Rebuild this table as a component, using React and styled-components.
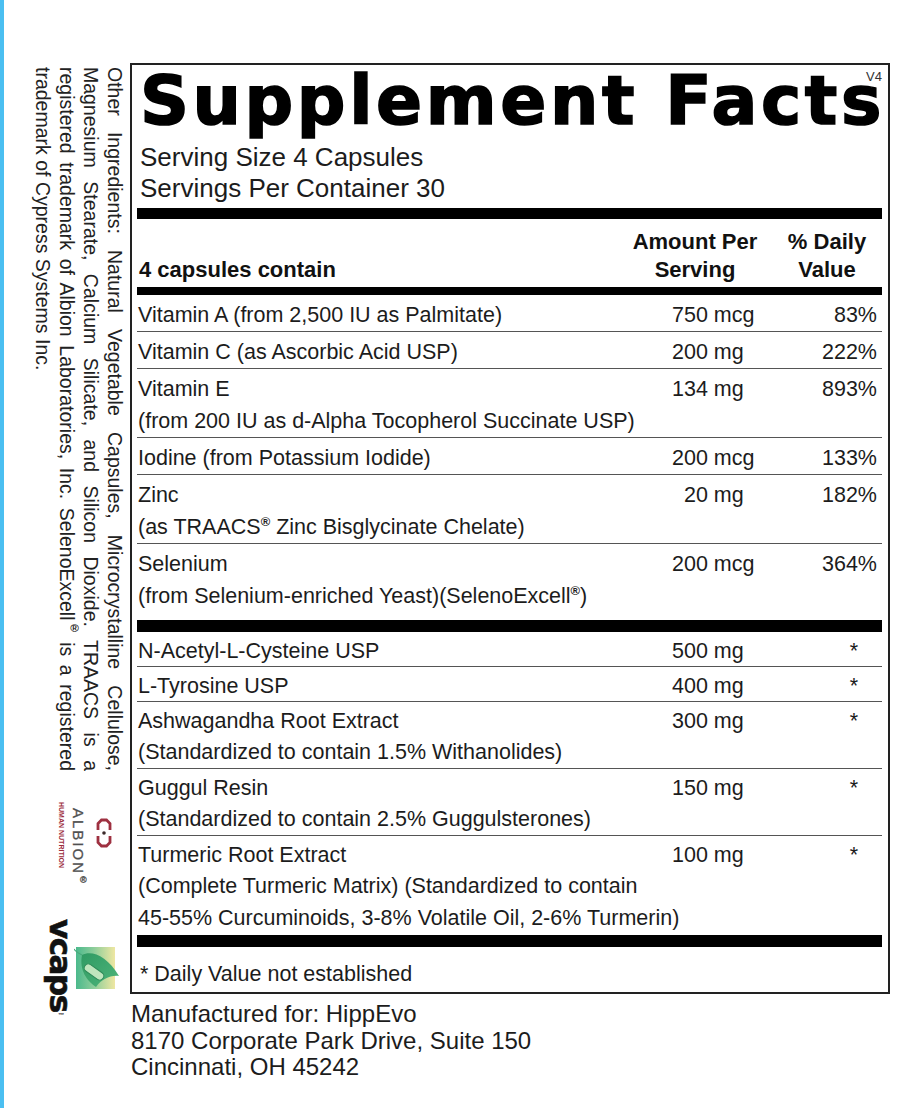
import React from "react";
import styled, { createGlobalStyle } from "styled-components";

const GlobalStyle = createGlobalStyle`
  html, body { margin: 0; padding: 0; background: #fff; }
  * { box-sizing: border-box; }
`;

const Page = styled.div`
  display: flex;
  min-height: 1108px;
  border-left: 4px solid #4bbff1;
  background: #fff;
  color: #1c1c1c;
  font-family: "Liberation Sans", Arial, sans-serif;
`;

const Side = styled.aside`
  width: 126px;
  flex: none;
  display: flex;
  flex-direction: column;
  align-items: flex-end;
  padding: 67px 3px 0 0;
`;

const Ingredients = styled.div`
  writing-mode: vertical-rl;
  height: 704px;
  font-size: 19.5px;
  line-height: 24px;
  color: #222;
`;

const IngLine = styled.div`
  text-align: justify;
  text-align-last: ${(p) => (p.$last ? "start" : "justify")};
`;

const Reg = styled.sup`
  font-size: 0.6em;
  font-weight: 700;
  line-height: 0;
  vertical-align: 0.6em;
`;

const Albion = styled.div`
  display: flex;
  align-items: flex-start;
  margin: 31px 14px 0 0;
`;

const HumanNutrition = styled.div`
  writing-mode: vertical-rl;
  font-size: 7px;
  line-height: 7px;
  font-weight: 700;
  color: #9b2c3c;
`;

const AlbionWord = styled.div`
  writing-mode: vertical-rl;
  font-size: 15px;
  line-height: 15px;
  letter-spacing: 2px;
  color: #505050;
  margin: 6px 0 0 6px;
  -webkit-text-stroke: 0.3px #505050;
`;

const AlbionMark = styled.svg`
  margin: 16px 0 0 9px;
  flex: none;
`;

const Vcaps = styled.div`
  display: flex;
  align-items: flex-start;
  margin: 32px 7px 0 0;
`;

const VcapsWord = styled.div`
  writing-mode: vertical-rl;
  font-family: "DejaVu Sans", sans-serif;
  font-weight: 700;
  font-size: 31px;
  line-height: 22px;
  letter-spacing: -1.5px;
  color: #111;
  -webkit-text-stroke: 0.6px #111;
`;

const Tm = styled.span`
  font-family: "Liberation Sans", sans-serif;
  font-size: 6px;
  font-weight: 700;
  letter-spacing: 0;
  -webkit-text-stroke: 0;
`;

const Leaf = styled.svg`
  margin: 27px 0 0 2px;
  flex: none;
`;

const Main = styled.main`
  width: 760px;
  flex: none;
  padding-top: 63px;
  display: flex;
  flex-direction: column;
`;

const Box = styled.section`
  border: 2px solid #222;
  padding: 0 6px 0 5px;
`;

const TitleRow = styled.div`
  position: relative;
  padding-top: 2px;
`;

const Title = styled.h1`
  margin: 0 0 0 3px;
  font-family: "DejaVu Sans", sans-serif;
  font-weight: 700;
  font-size: 68px;
  line-height: 68px;
  letter-spacing: 3.6px;
  white-space: nowrap;
  color: #000;
  -webkit-text-stroke: 1.6px #000;
`;

const Version = styled.span`
  position: absolute;
  top: 5px;
  right: 0;
  font-size: 13px;
  line-height: 13px;
  color: #333;
`;

const Serving = styled.div`
  margin-top: 7px;
  padding: 0 0 4px 3px;
  font-size: 26px;
  line-height: 31px;
`;

const Bar = styled.div`
  height: ${(p) => p.$h}px;
  background: #000;
`;

const HeaderGrid = styled.div`
  display: grid;
  grid-template-columns: 1fr 160px 100px;
  padding: 9px 0 3px;
  font-weight: 700;
  font-size: 22px;
  line-height: 28px;
  color: #111;
`;

const HeadName = styled.div`
  align-self: end;
  padding-left: 2px;
`;

const HeadCol = styled.div`
  text-align: center;
  padding-right: ${(p) => p.$pr}px;
`;

const Row = styled.div`
  display: grid;
  grid-template-columns: 1fr 160px 100px;
  font-size: 21.5px;
  line-height: ${(p) => (p.$dense ? 30 : 31)}px;
  padding: ${(p) => (p.$dense ? 4 : 5)}px 0 ${(p) => p.$pb}px;
  border-bottom: ${(p) => (p.$last ? "none" : "1.5px solid #555")};
`;

const Name = styled.div`
  padding-left: 1px;
  white-space: nowrap;
`;

const Amount = styled.div`
  padding-left: 50px;
  white-space: nowrap;
`;

const Pct = styled.div`
  text-align: right;
  padding-right: ${(p) => (p.$star ? 24 : 5)}px;
`;

const Sub = styled.div`
  grid-column: 1 / -1;
  padding-left: 1px;
  line-height: 32px;
  white-space: nowrap;
`;

const Footnote = styled.div`
  padding: 11px 0 1px 3px;
  font-size: 21.5px;
  line-height: 33px;
`;

const Maker = styled.div`
  margin-top: 7px;
  padding-left: 1px;
  font-size: 24px;
  line-height: 26.5px;
  color: #1c1c1c;
`;

const vitamins = [
  { name: "Vitamin A (from 2,500 IU as Palmitate)", amt: "750 mcg", pct: "83%" },
  { name: "Vitamin C (as Ascorbic Acid USP)", amt: "200 mg", pct: "222%" },
  {
    name: "Vitamin E",
    sub: ["(from 200 IU as d-Alpha Tocopherol Succinate USP)"],
    amt: "134 mg",
    pct: "893%",
  },
  { name: "Iodine (from Potassium Iodide)", amt: "200 mcg", pct: "133%" },
  {
    name: "Zinc",
    sub: [
      <>
        (as TRAACS<Reg>®</Reg> Zinc Bisglycinate Chelate)
      </>,
    ],
    amt: "\u200720 mg",
    pct: "182%",
  },
  {
    name: "Selenium",
    sub: [
      <>
        (from Selenium-enriched Yeast)(SelenoExcell<Reg>®</Reg>)
      </>,
    ],
    amt: "200 mcg",
    pct: "364%",
  },
];

const others = [
  { name: "N-Acetyl-L-Cysteine USP", amt: "500 mg", pct: "*" },
  { name: "L-Tyrosine USP", amt: "400 mg", pct: "*" },
  {
    name: "Ashwagandha Root Extract",
    sub: ["(Standardized to contain 1.5% Withanolides)"],
    amt: "300 mg",
    pct: "*",
  },
  {
    name: "Guggul Resin",
    sub: ["(Standardized to contain 2.5% Guggulsterones)"],
    amt: "150 mg",
    pct: "*",
  },
  {
    name: "Turmeric Root Extract",
    sub: [
      "(Complete Turmeric Matrix) (Standardized to contain",
      "45-55% Curcuminoids, 3-8% Volatile Oil, 2-6% Turmerin)",
    ],
    amt: "100 mg",
    pct: "*",
  },
];

function FactRows({ items, dense, lastPad }) {
  return items.map((it, i) => {
    const last = i === items.length - 1;
    return (
      <Row key={i} $dense={dense} $last={last} $pb={last ? lastPad : 0}>
        <Name>{it.name}</Name>
        <Amount>{it.amt}</Amount>
        <Pct $star={it.pct === "*"}>{it.pct}</Pct>
        {(it.sub || []).map((s, j) => (
          <Sub key={j}>{s}</Sub>
        ))}
      </Row>
    );
  });
}

function AlbionLogo() {
  return (
    <Albion>
      <HumanNutrition>HUMAN NUTRITION</HumanNutrition>
      <AlbionWord>
        ALBION<Reg>®</Reg>
      </AlbionWord>
      <AlbionMark width="18" height="30" viewBox="0 0 18 30" aria-hidden="true">
        <path
          d="M3 12 V5.5 L6.5 2 H11.5 L15 5.5 V12"
          fill="none"
          stroke="#9e3040"
          strokeWidth="2.8"
        />
        <path
          d="M3 18 V24.5 L6.5 28 H11.5 L15 24.5 V18"
          fill="none"
          stroke="#9e3040"
          strokeWidth="2.8"
        />
        <circle cx="9" cy="15" r="1.8" fill="#3a2a2a" />
      </AlbionMark>
    </Albion>
  );
}

function VcapsLogo() {
  return (
    <Vcaps>
      <VcapsWord>
        vcaps<Tm>™</Tm>
      </VcapsWord>
      <Leaf width="46" height="46" viewBox="0 0 46 46" aria-hidden="true">
        <defs>
          <linearGradient id="vcSq" x1="0" y1="0" x2="1" y2="0">
            <stop offset="0" stopColor="#4bb98c" />
            <stop offset="0.45" stopColor="#8ccd9a" />
            <stop offset="1" stopColor="#efe7a2" />
          </linearGradient>
          <linearGradient id="vcLeaf" x1="0" y1="0" x2="1" y2="1">
            <stop offset="0" stopColor="#2f9a63" />
            <stop offset="1" stopColor="#4fb57a" />
          </linearGradient>
        </defs>
        <rect x="2" y="1" width="39" height="42" fill="url(#vcSq)" />
        <path
          d="M8 9 C18 4 33 10 45 30 C36 29 28 33 22 41 C13 35 5 24 8 9 Z"
          fill="url(#vcLeaf)"
        />
        <path d="M8 9 C4 7 1 5 0 3" fill="none" stroke="#4aa87a" strokeWidth="1.2" />
        <rect
          x="9"
          y="22"
          width="22"
          height="8"
          rx="4"
          transform="rotate(35 20 26)"
          fill="#bfe5bd"
          stroke="#2e8a58"
          strokeWidth="1"
        />
      </Leaf>
    </Vcaps>
  );
}

export default function App() {
  return (
    <>
      <GlobalStyle />
      <Page>
        <Side>
          <Ingredients>
            <IngLine>
              Other Ingredients: Natural Vegetable Capsules, Microcrystalline Cellulose,
            </IngLine>
            <IngLine>
              Magnesium Stearate, Calcium Silicate, and Silicon Dioxide. TRAACS is a
            </IngLine>
            <IngLine>
              registered trademark of Albion Laboratories, Inc. SelenoExcell<Reg>®</Reg> is a
              registered
            </IngLine>
            <IngLine $last>trademark of Cypress Systems Inc.</IngLine>
          </Ingredients>
          <AlbionLogo />
          <VcapsLogo />
        </Side>
        <Main>
          <Box>
            <TitleRow>
              <Title>Supplement Facts</Title>
              <Version>V4</Version>
            </TitleRow>
            <Serving>
              <div>Serving Size 4 Capsules</div>
              <div>Servings Per Container 30</div>
            </Serving>
            <Bar $h={11} />
            <HeaderGrid>
              <HeadName>4 capsules contain</HeadName>
              <HeadCol $pr={14}>
                Amount Per
                <br />
                Serving
              </HeadCol>
              <HeadCol $pr={10}>
                % Daily
                <br />
                Value
              </HeadCol>
            </HeaderGrid>
            <Bar $h={8} />
            <FactRows items={vitamins} lastPad={8} />
            <Bar $h={12} />
            <FactRows items={others} dense lastPad={1} />
            <Bar $h={12} />
            <Footnote>* Daily Value not established</Footnote>
          </Box>
          <Maker>
            <div>Manufactured for: HippEvo</div>
            <div>8170 Corporate Park Drive, Suite 150</div>
            <div>Cincinnati, OH 45242</div>
          </Maker>
        </Main>
      </Page>
    </>
  );
}
